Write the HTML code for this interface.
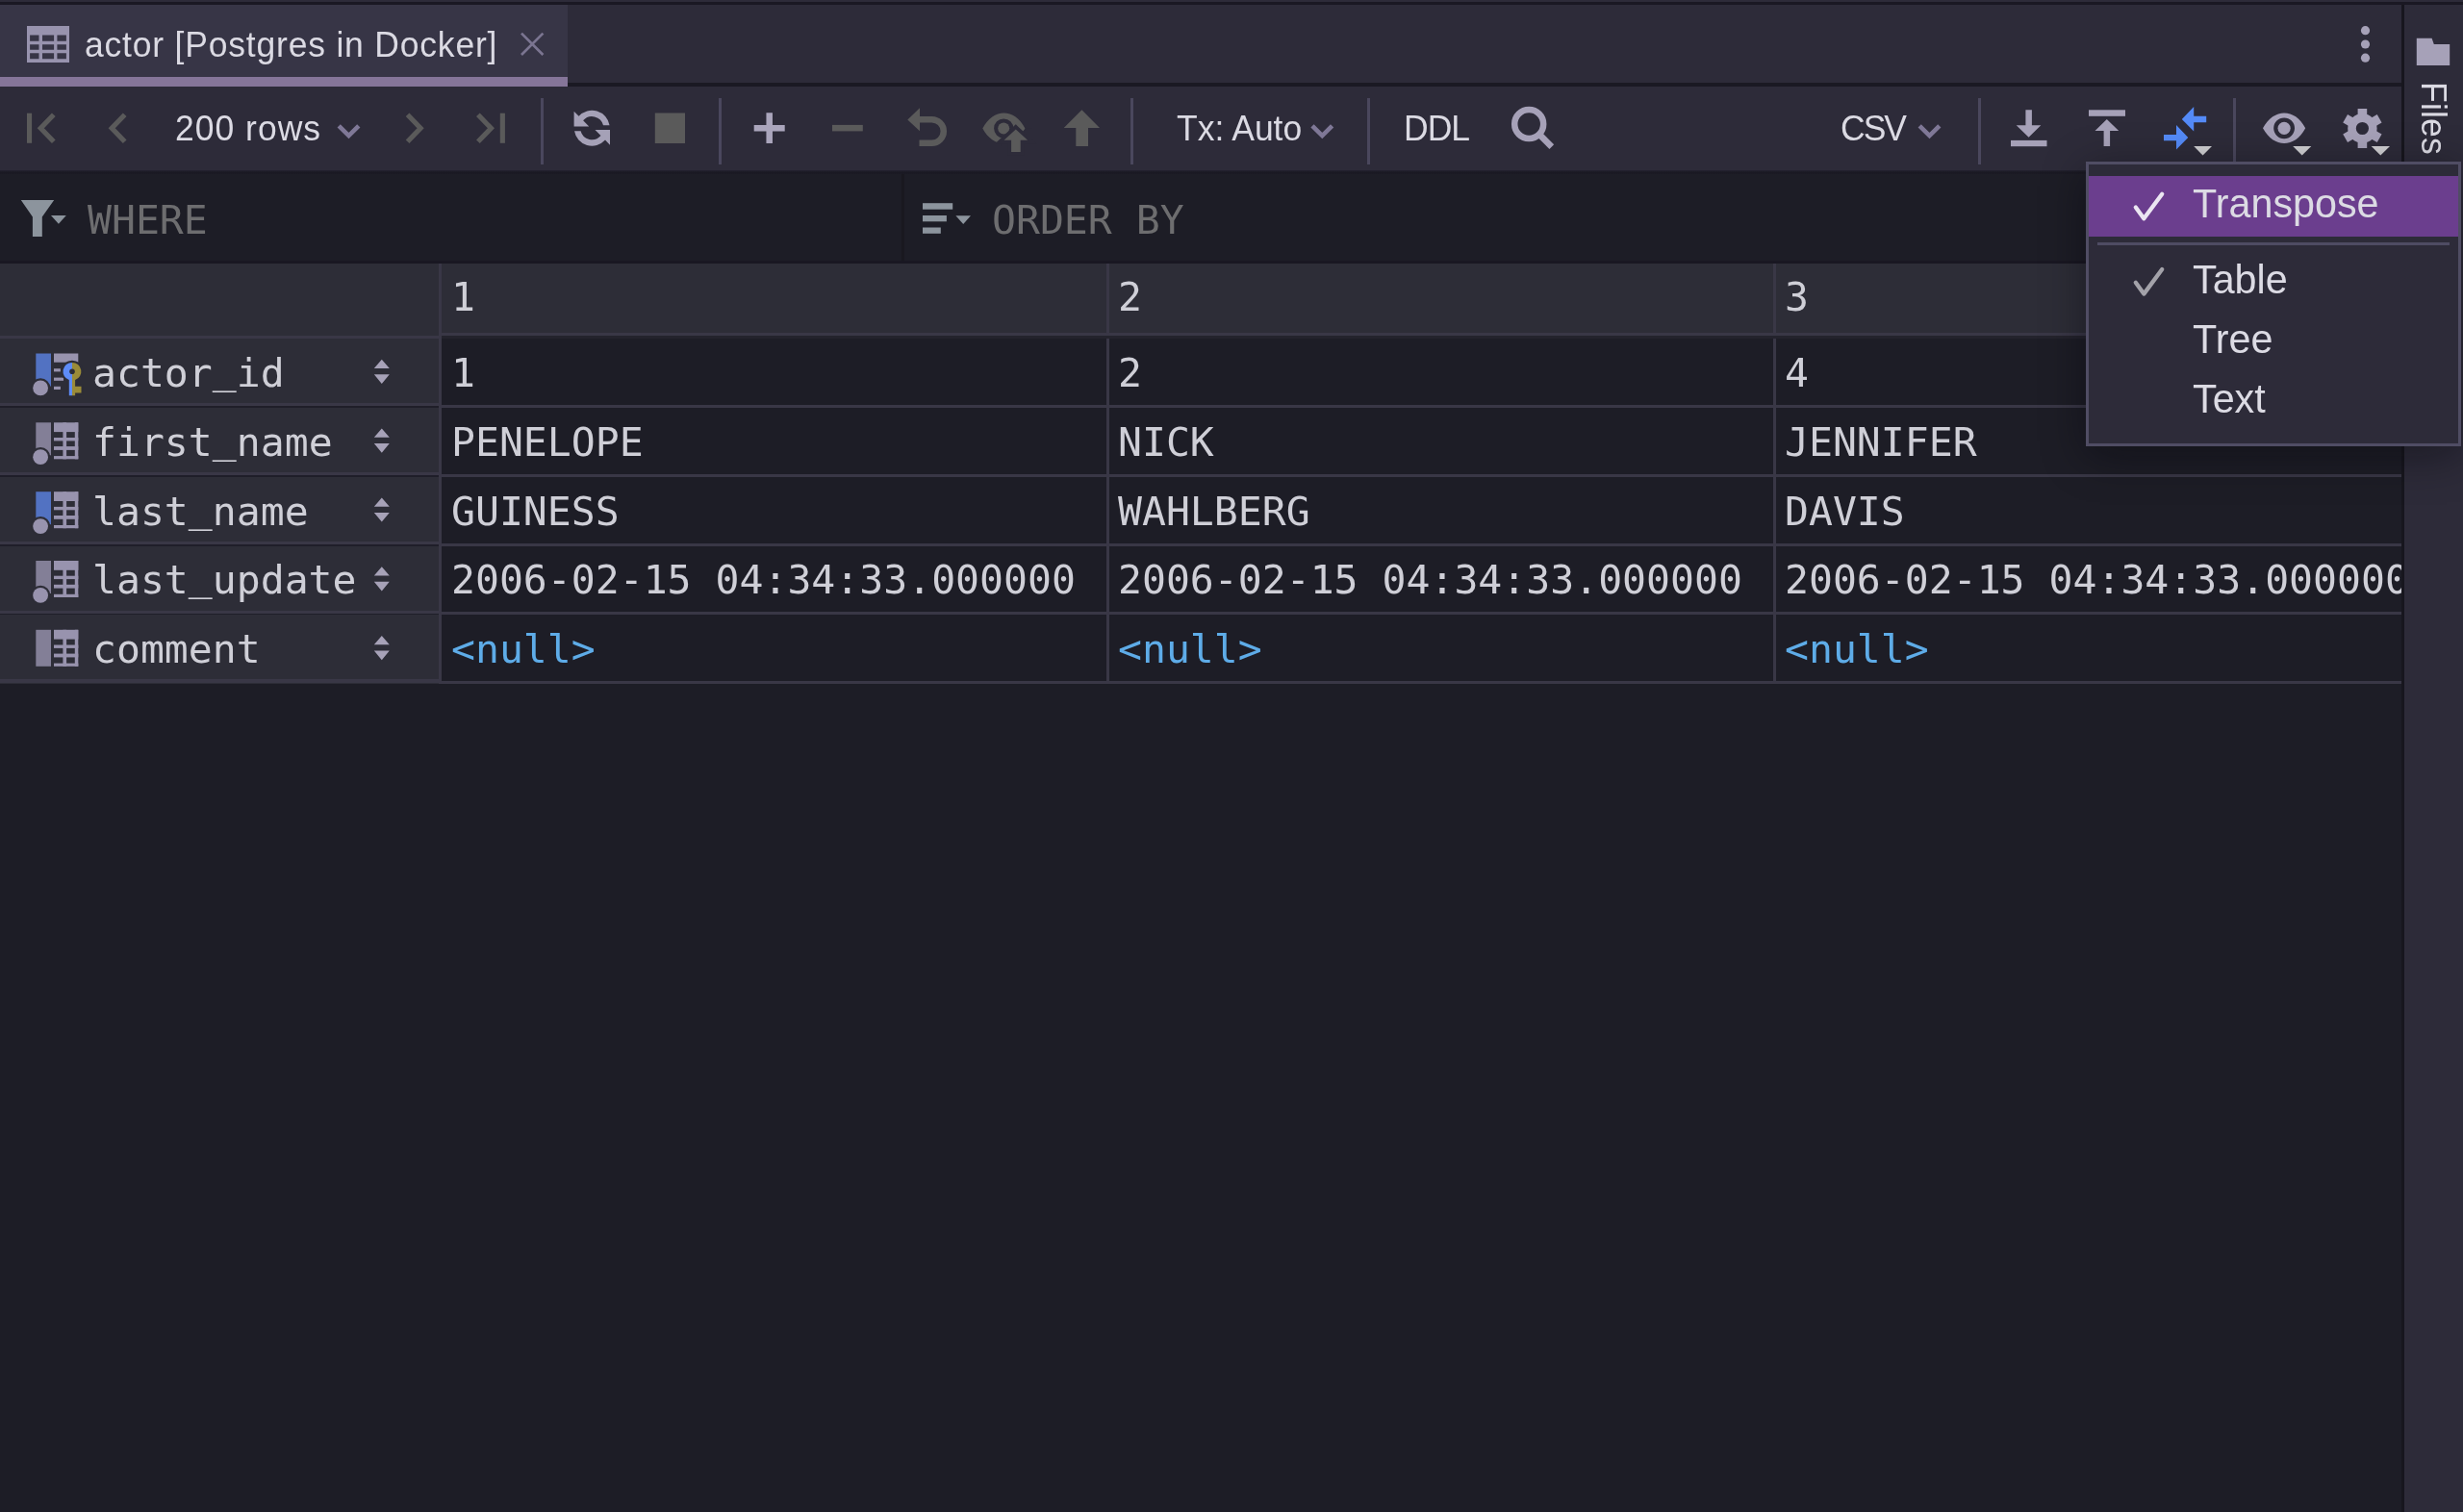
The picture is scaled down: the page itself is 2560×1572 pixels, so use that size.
<!DOCTYPE html>
<html lang="en">
<head>
<meta charset="utf-8">
<title>actor [Postgres in Docker]</title>
<style>
  html, body { margin: 0; padding: 0; }
  body {
    width: 2560px; height: 1572px; overflow: hidden; position: relative;
    background: #1d1d26;
    font-family: "Liberation Sans", sans-serif;
    color: #dcdbe4;
  }
  .abs { position: absolute; }
  .ui, .mono, .pi { will-change: transform; }
  .ui { font-family: "Liberation Sans", sans-serif; font-size: 35.5px; line-height: 40px; white-space: nowrap; color: #dbdae3; transform: scaleY(1.05); transform-origin: 0 32.3px; }
  .mono { font-family: "DejaVu Sans Mono", "Liberation Mono", monospace; font-size: 41.46px; line-height: 48px; white-space: pre; color: #cfcfd7; }
  svg { position: absolute; overflow: visible; }

  /* ---------- chrome ---------- */
  #topstrip { left: 0; top: 0; width: 2560px; height: 2px; background: #2d2b39; }
  #topline  { left: 0; top: 2px; width: 2560px; height: 3px; background: #1a1823; }
  #tabbar   { left: 0; top: 5px; width: 2496px; height: 81px; background: #2d2b39; }
  #tabline  { left: 590px; top: 86px; width: 1906px; height: 4px; background: #1a1923; }
  #tab      { left: 0; top: 5px; width: 590px; height: 75px; background: #373546; }
  #tabul    { left: 0; top: 80px; width: 590px; height: 10px; background: #857599; }
  #toolbar  { left: 0; top: 90px; width: 2496px; height: 87px; background: #2d2b39; }
  #toolsh   { left: 0; top: 177px; width: 2496px; height: 4px; background: linear-gradient(#232230, #1a1923 50%, #1b1a24); }
  #filter   { left: 0; top: 181px; width: 2496px; height: 90px; background: #1d1d26; }
  #filtdiv  { left: 937px; top: 181px; width: 3px; height: 90px; background: #19181f; }
  #filtline { left: 0; top: 271px; width: 2496px; height: 3px; background: #191722; }
  #strip    { left: 2499px; top: 5px; width: 61px; height: 1567px; background: #2d2b39; }
  #stripdiv { left: 2496px; top: 5px; width: 3px; height: 1567px; background: #17161e; }
  .sep { width: 3px; top: 102px; height: 69px; background: #4a475d; }

  /* ---------- table ---------- */
  #tablewrap { left: 0; top: 274px; width: 2496px; height: 440px; overflow: hidden; }
  .hdrbg { background: #2d2d37; }
  .gl { background: #393746; }
  .cell { height: 48px; }
  .null { color: #5eace8; }
  .rh { left: 98px; }
  .us { position: relative; top: -4.5px; }

  /* ---------- popup ---------- */
  #popup {
    left: 2168px; top: 168px; width: 384px; height: 290px;
    border: 3px solid #504d64; background: #2d2b39;
    box-shadow: 0 10px 42px 0 rgba(5,5,10,0.42);
  }
  #popup .sel { left: 0; top: 12px; width: 384px; height: 63px; background: #6b3e8e; }
  #popup .psep { left: 9px; top: 81px; width: 366px; height: 3px; background: #4f4c63; }
  .pi { font-family: "Liberation Sans", sans-serif; font-size: 41.3px; line-height: 46px; white-space: nowrap; color: #dcdbe4; left: 107.6px; transform: scaleY(1.01); transform-origin: 0 37.3px; }
</style>
</head>
<body>

<!-- window chrome backgrounds -->
<div class="abs" id="topstrip"></div>
<div class="abs" id="topline"></div>
<div class="abs" id="tabbar"></div>
<div class="abs" id="tabline"></div>
<div class="abs" id="tab"></div>
<div class="abs" id="tabul"></div>
<div class="abs" id="toolbar"></div>
<div class="abs" id="toolsh"></div>
<div class="abs" id="filter"></div>
<div class="abs" id="filtdiv"></div>
<div class="abs" id="filtline"></div>

<!-- TAB -->
<svg style="left:28px;top:27px" width="44" height="38" viewBox="0 0 44 38">
  <path fill="#9893ae" fill-rule="evenodd" d="M0 0H44V38H0Z
    M3.1 9.5V15.7H12.5V9.5Z M16 9.5V15.7H28.1V9.5Z M31.4 9.5V15.7H40.9V9.5Z
    M3.1 19.2V24.8H12.5V19.2Z M16 19.2V24.8H28.1V19.2Z M31.4 19.2V24.8H40.9V19.2Z
    M3.1 28.2V34.2H12.5V28.2Z M16 28.2V34.2H28.1V28.2Z M31.4 28.2V34.2H40.9V28.2Z"/>
</svg>
<div class="abs ui" id="tabtext" style="left:88px;top:26.8px;letter-spacing:0.8px">actor [Postgres in Docker]</div>
<svg style="left:541px;top:34px" width="24" height="24" viewBox="0 0 24 24">
  <path d="M1 0.6L23.4 23M23.4 0.6L1 23" stroke="#7b7591" stroke-width="2.7" fill="none"/>
</svg>
<svg style="left:2450px;top:24px" width="18" height="44" viewBox="0 0 18 44">
  <circle cx="8.5" cy="7.7" r="4.6" fill="#a6a1b8"/><circle cx="8.5" cy="22" r="4.6" fill="#a6a1b8"/><circle cx="8.5" cy="36.2" r="4.6" fill="#a6a1b8"/>
</svg>

<!-- TOOLBAR -->
<div class="abs sep" style="left:562px"></div>
<div class="abs sep" style="left:747px"></div>
<div class="abs sep" style="left:1175px"></div>
<div class="abs sep" style="left:1421px"></div>
<div class="abs sep" style="left:2056px"></div>
<div class="abs sep" style="left:2321px"></div>
<svg id="tbicons" style="left:0;top:90px" width="2496" height="87" viewBox="0 90 2496 87">
  <!-- pagination (disabled) -->
  <g fill="none" stroke="#5a5a5a" stroke-width="5.2">
    <path d="M55.8 119.3L42.3 133.3L55.8 147.3"/>
    <path d="M129.7 119.3L116.2 133.3L129.7 147.3"/>
    <path d="M423.6 119.3L437.1 133.3L423.6 147.3"/>
    <path d="M496.9 119.3L510.4 133.3L496.9 147.3"/>
  </g>
  <rect x="28" y="117.7" width="5.1" height="31.1" fill="#5a5a5a"/>
  <rect x="519.8" y="117.7" width="5.1" height="31.1" fill="#5a5a5a"/>
  <!-- dropdown chevrons -->
  <g fill="none" stroke="#7f7897" stroke-width="4.6">
    <path d="M352.2 130.8L362.5 141.1L372.8 130.8"/>
    <path d="M1364 130.8L1374.3 141.1L1384.6 130.8"/>
    <path d="M1995.2 130.8L2005.5 141.1L2015.8 130.8"/>
  </g>
  <!-- refresh -->
  <g fill="#a5a1b7">
    <path d="M596.6 115.8L601.58 120.78A18.5 18.5 0 0 1 633.55 130.2H627A12.1 12.1 0 0 0 606.12 125.32L612.2 131.6H596.6Z"/>
    <path d="M634 150.8L629.02 145.62A18.5 18.5 0 0 1 597.05 136.2H603.6A12.1 12.1 0 0 0 624.48 141.08L618.5 135.1H634Z"/>
  </g>
  <!-- stop -->
  <rect x="680.8" y="117.5" width="31.2" height="31.5" fill="#5a5a5a"/>
  <!-- plus -->
  <path d="M783.7 133.2H815.7M799.7 117.3V149" stroke="#aaa5bc" stroke-width="6.5" fill="none"/>
  <!-- minus -->
  <rect x="865" y="129.9" width="31.8" height="6.5" fill="#5a5a5a"/>
  <!-- undo -->
  <path d="M943.3 124.4L956 112.3V136.3Z" fill="#5a5a5a"/>
  <path d="M955.5 124.2H968.5A12.3 12.3 0 0 1 968.5 148.8H955.5" stroke="#5a5a5a" stroke-width="6.5" fill="none"/>
  <!-- eye + arrow (disabled) -->
  <path fill="#5a5a5a" fill-rule="evenodd" d="M1021.3 133.5C1027 122.8 1035 117.6 1043.3 117.6C1052 117.6 1060 122.8 1065.4 133.5C1060 144 1052 149.3 1043.3 149.3C1035 149.3 1027 144 1021.3 133.5Z M1043.2 123.4A10.1 10.1 0 1 0 1043.2 143.6A10.1 10.1 0 1 0 1043.2 123.4Z"/>
  <circle cx="1043.2" cy="133.5" r="6" fill="#5a5a5a"/>
  <path d="M1067.5 133.2L1060.5 138.5V153H1073V133.2Z M1040.5 147.6H1052V152H1040.5Z" fill="#2d2b39"/>
  <path d="M1055.8 134.4L1068.1 145.8H1060.7V158H1051.1V145.8H1043.5Z" fill="#5a5a5a" stroke="#2d2b39" stroke-width="7.4" paint-order="stroke" stroke-linejoin="miter"/>
  <!-- up arrow (disabled) -->
  <path d="M1124.4 114.3L1143 132.9H1131V152H1118.3V132.9H1105.7Z" fill="#5a5a5a"/>
  <!-- search -->
  <circle cx="1589.2" cy="129" r="15" fill="none" stroke="#a6a1b8" stroke-width="6.5"/>
  <path d="M1599.6 139.4L1612.8 152.6" stroke="#a6a1b8" stroke-width="6.6" fill="none"/>
  <!-- download -->
  <g fill="#a6a1b8">
    <rect x="2090" y="145.9" width="37.5" height="6.3"/>
    <path d="M2105.4 114.3H2111.9V130.3H2121.3L2108.6 142.8L2095.7 130.3H2105.4Z"/>
    <!-- upload -->
    <rect x="2171" y="114.3" width="38" height="6.5"/>
    <path d="M2189.8 124L2202.2 136.1H2193.1V152.1H2186.6V136.1H2177.5Z"/>
  </g>
  <!-- transpose (active, blue) -->
  <g fill="#548af7">
    <path d="M2267.8 124L2280.2 111V120.8H2293.2V127.3H2280.2V136.6Z"/>
    <path d="M2274.3 143L2262 155.6V146.2H2249V139.9H2262V130Z"/>
  </g>
  <!-- small dropdown triangles -->
  <g fill="#cfcfd2">
    <path d="M2280.2 152.1H2299L2289.6 161.5Z"/>
    <path d="M2383.2 152.1H2402.3L2392.7 161.5Z"/>
    <path d="M2464.7 152.1H2484L2474.3 161.5Z"/>
  </g>
  <!-- eye -->
  <path fill="#a6a1b8" fill-rule="evenodd" d="M2352 133.3C2358 122.5 2366 117.5 2374.1 117.5C2382.5 117.5 2390.5 122.5 2396.2 133.3C2390.5 144 2382.5 149.1 2374.1 149.1C2366 149.1 2358 144 2352 133.3Z M2374.1 122.4A10.9 10.9 0 1 0 2374.1 144.2A10.9 10.9 0 1 0 2374.1 122.4Z"/>
  <circle cx="2374.1" cy="133.3" r="6.6" fill="#a6a1b8"/>
  <!-- gear -->
  <g id="gear" transform="translate(2455.4 133.5)" fill="#a6a1b8">
    <path fill-rule="evenodd" d="M0 -15.2A15.2 15.2 0 1 0 0 15.2A15.2 15.2 0 1 0 0 -15.2Z M0 -6.6A6.6 6.6 0 1 1 0 6.6A6.6 6.6 0 1 1 0 -6.6Z"/>
    <rect x="-4.8" y="-20.5" width="9.6" height="9"/>
    <rect x="-4.8" y="-20.5" width="9.6" height="9" transform="rotate(60)"/>
    <rect x="-4.8" y="-20.5" width="9.6" height="9" transform="rotate(120)"/>
    <rect x="-4.8" y="-20.5" width="9.6" height="9" transform="rotate(180)"/>
    <rect x="-4.8" y="-20.5" width="9.6" height="9" transform="rotate(240)"/>
    <rect x="-4.8" y="-20.5" width="9.6" height="9" transform="rotate(300)"/>
  </g>
</svg>
<div class="abs ui" id="t_rows" style="left:181.5px;top:113.7px;letter-spacing:1px">200 rows</div>
<div class="abs ui" id="t_tx" style="left:1222.5px;top:113.7px">Tx: Auto</div>
<div class="abs ui" id="t_ddl" style="left:1458.5px;top:113.7px;letter-spacing:-1px">DDL</div>
<div class="abs ui" id="t_csv" style="left:1912.5px;top:113.7px;letter-spacing:-2px">CSV</div>

<!-- FILTER -->
<svg id="flticons" style="left:0;top:181px" width="1300" height="90" viewBox="0 181 1300 90">
  <g fill="#8c949d">
    <path d="M21.8 208H56.2L43.8 225.5V246H33.9V225.5Z"/>
    <path d="M53 224H68.8L60.9 232.8Z"/>
    <rect x="959" y="211.2" width="31.2" height="6.5"/>
    <rect x="959" y="224" width="24.9" height="6.3"/>
    <rect x="959" y="236.5" width="18.8" height="6.3"/>
    <path d="M993.4 224.2H1009L1001.2 232.9Z"/>
  </g>
</svg>
<div class="abs mono" id="t_where" style="left:91px;top:204.5px;color:#6d6d6f">WHERE</div>
<div class="abs mono" id="t_order" style="left:1031.3px;top:204.5px;color:#6d6d6f">ORDER BY</div>

<!-- TABLE -->
<div class="abs hdrbg" style="left:0;top:274px;width:2496px;height:72px"></div>
<div class="abs hdrbg" style="left:0;top:346px;width:456px;height:365px"></div>
<div class="abs gl" style="left:459px;top:346px;width:2037px;height:3px"></div>
<div class="abs gl" style="left:0;top:349px;width:456px;height:3px"></div>
<div class="abs gl" style="left:459px;top:420.8px;width:2037px;height:3.2px"></div>
<div class="abs gl" style="left:0;top:419.1px;width:456px;height:3.2px"></div>
<div class="abs" style="left:0;top:422.3px;width:456px;height:1.7px;background:#1f1e29"></div>
<div class="abs gl" style="left:459px;top:492.6px;width:2037px;height:3.2px"></div>
<div class="abs gl" style="left:0;top:490.9px;width:456px;height:3.2px"></div>
<div class="abs" style="left:0;top:494.1px;width:456px;height:1.7px;background:#1f1e29"></div>
<div class="abs gl" style="left:459px;top:564.5px;width:2037px;height:3.2px"></div>
<div class="abs gl" style="left:0;top:562.8px;width:456px;height:3.2px"></div>
<div class="abs" style="left:0;top:566.0px;width:456px;height:1.7px;background:#1f1e29"></div>
<div class="abs gl" style="left:459px;top:636.3px;width:2037px;height:3.2px"></div>
<div class="abs gl" style="left:0;top:634.6px;width:456px;height:3.2px"></div>
<div class="abs" style="left:0;top:637.8px;width:456px;height:1.7px;background:#1f1e29"></div>
<div class="abs gl" style="left:459px;top:708.1px;width:2037px;height:3.2px"></div>
<div class="abs gl" style="left:0;top:706.4px;width:456px;height:3.2px"></div>
<div class="abs gl" style="left:456px;top:274px;width:3.2px;height:437.3px"></div>
<div class="abs gl" style="left:1149.6px;top:274px;width:3.2px;height:437.3px"></div>
<div class="abs gl" style="left:1843px;top:274px;width:3.2px;height:437.3px"></div>
<div class="abs" style="left:459px;top:349px;width:2037px;height:3.3px;background:#24232d"></div>
<div class="abs mono cell" style="left:468.5px;top:285.45px">1</div>
<div class="abs mono cell" style="left:1161.8px;top:285.45px">2</div>
<div class="abs mono cell" style="left:1855.1px;top:285.45px">3</div>
<div class="abs mono cell rh" style="left:96px;top:363.85px">actor<span class="us">_</span>id</div>
<div class="abs mono cell" style="left:468.5px;top:363.85px">1</div>
<div class="abs mono cell" style="left:1161.8px;top:363.85px">2</div>
<div class="abs mono cell" style="left:1855.1px;top:363.85px">4</div>
<div class="abs mono cell rh" style="left:96px;top:435.68px">first<span class="us">_</span>name</div>
<div class="abs mono cell" style="left:468.5px;top:435.68px">PENELOPE</div>
<div class="abs mono cell" style="left:1161.8px;top:435.68px">NICK</div>
<div class="abs mono cell" style="left:1855.1px;top:435.68px">JENNIFER</div>
<div class="abs mono cell rh" style="left:96px;top:507.51px">last<span class="us">_</span>name</div>
<div class="abs mono cell" style="left:468.5px;top:507.51px">GUINESS</div>
<div class="abs mono cell" style="left:1161.8px;top:507.51px">WAHLBERG</div>
<div class="abs mono cell" style="left:1855.1px;top:507.51px">DAVIS</div>
<div class="abs mono cell rh" style="left:96px;top:579.34px">last<span class="us">_</span>update</div>
<div class="abs mono cell" style="left:468.5px;top:579.34px">2006-02-15 04:34:33.000000</div>
<div class="abs mono cell" style="left:1161.8px;top:579.34px">2006-02-15 04:34:33.000000</div>
<div class="abs mono cell" style="left:1855.1px;top:579.34px">2006-02-15 04:34:33.000000</div>
<div class="abs mono cell rh" style="left:96px;top:651.17px">comment</div>
<div class="abs mono cell null" style="left:468.5px;top:651.17px">&lt;null&gt;</div>
<div class="abs mono cell null" style="left:1161.8px;top:651.17px">&lt;null&gt;</div>
<div class="abs mono cell null" style="left:1855.1px;top:651.17px">&lt;null&gt;</div>
<svg id="rowicons" style="left:0;top:274px" width="460" height="440" viewBox="0 274 460 440">
<path fill="#a7a2b8" d="M396.8 373.8L404.8 383.0H388.8Z M388.8 389.2H404.8L396.8 398.9Z"/>
<rect x="37.3" y="367.5" width="15.7" height="34" fill="#5272c2"/>
<circle cx="42.1" cy="403.4" r="7.9" fill="#9893ae" stroke="#2d2d37" stroke-width="4.6" paint-order="stroke"/>
<g fill="#9893ae"><rect x="56" y="367.5" width="25.3" height="9.2"/><rect x="56" y="383.2" width="6.9" height="3.2"/><rect x="56" y="392.6" width="10" height="3.2"/><rect x="56" y="401.8" width="6.9" height="3.2"/></g>
<path d="M75 376.9A9.3 9.3 0 0 1 78.1 395.0V401.8H84.5V408.5H78.1V411.2H71.8V395.0A9.3 9.3 0 0 1 75 376.9Z" fill="#2d2d37" stroke="#2d2d37" stroke-width="4.4"/>
<path fill="#5e8cf8" d="M75 376.9A9.3 9.3 0 0 0 71.8 395.0V411.2H75Z"/>
<path fill="#9a8b38" d="M75 376.9A9.3 9.3 0 0 1 78.1 395.0V401.8H84.5V408.5H78.1V411.2H75Z"/>
<circle cx="75" cy="386.2" r="2.8" fill="#2d2d37"/>
<path fill="#a7a2b8" d="M396.8 445.6L404.8 454.8H388.8Z M388.8 461.0H404.8L396.8 470.7Z"/>
<rect x="37.3" y="439.3" width="15.7" height="34" fill="#837f97"/>
<circle cx="42.1" cy="475.2" r="7.9" fill="#9893ae" stroke="#2d2d37" stroke-width="4.6" paint-order="stroke"/>
<g fill="#9893ae"><rect x="56" y="439.3" width="25.3" height="9.8"/><rect x="77.8" y="439.3" width="3.5" height="38"/><rect x="65.4" y="439.3" width="3.7" height="38"/><rect x="56" y="455.0" width="25.3" height="3.4"/><rect x="56" y="464.1" width="25.3" height="3.8"/><rect x="56" y="474.1" width="25.3" height="3.2"/></g>
<path fill="#a7a2b8" d="M396.8 517.5L404.8 526.7H388.8Z M388.8 532.9H404.8L396.8 542.6Z"/>
<rect x="37.3" y="511.2" width="15.7" height="34" fill="#5272c2"/>
<circle cx="42.1" cy="547.1" r="7.9" fill="#9893ae" stroke="#2d2d37" stroke-width="4.6" paint-order="stroke"/>
<g fill="#9893ae"><rect x="56" y="511.2" width="25.3" height="9.8"/><rect x="77.8" y="511.2" width="3.5" height="38"/><rect x="65.4" y="511.2" width="3.7" height="38"/><rect x="56" y="526.9" width="25.3" height="3.4"/><rect x="56" y="536.0" width="25.3" height="3.8"/><rect x="56" y="546.0" width="25.3" height="3.2"/></g>
<path fill="#a7a2b8" d="M396.8 589.3L404.8 598.5H388.8Z M388.8 604.7H404.8L396.8 614.4Z"/>
<rect x="37.3" y="583.0" width="15.7" height="34" fill="#837f97"/>
<circle cx="42.1" cy="618.9" r="7.9" fill="#9893ae" stroke="#2d2d37" stroke-width="4.6" paint-order="stroke"/>
<g fill="#9893ae"><rect x="56" y="583.0" width="25.3" height="9.8"/><rect x="77.8" y="583.0" width="3.5" height="38"/><rect x="65.4" y="583.0" width="3.7" height="38"/><rect x="56" y="598.7" width="25.3" height="3.4"/><rect x="56" y="607.8" width="25.3" height="3.8"/><rect x="56" y="617.8" width="25.3" height="3.2"/></g>
<path fill="#a7a2b8" d="M396.8 661.1L404.8 670.3H388.8Z M388.8 676.5H404.8L396.8 686.2Z"/>
<rect x="37.3" y="654.8" width="15.7" height="38" fill="#837f97"/>
<g fill="#9893ae"><rect x="56" y="654.8" width="25.3" height="9.8"/><rect x="77.8" y="654.8" width="3.5" height="38"/><rect x="65.4" y="654.8" width="3.7" height="38"/><rect x="56" y="670.5" width="25.3" height="3.4"/><rect x="56" y="679.6" width="25.3" height="3.8"/><rect x="56" y="689.6" width="25.3" height="3.2"/></g>
</svg>

<!-- RIGHT STRIP -->
<div class="abs" id="stripdiv"></div>
<div class="abs" id="strip"></div>
<svg style="left:2511px;top:39px" width="36" height="30" viewBox="2511 39 36 30">
  <path fill="#a6a1b8" d="M2511.8 39.7H2527.6L2529.8 46H2546.2V68.1H2511.8Z"/>
</svg>
<div class="abs ui" id="t_files" style="left:2551px;top:85.3px;transform-origin:0 0;transform:rotate(90deg) scaleY(1.05);letter-spacing:0.2px">Files</div>

<!-- POPUP -->
<div class="abs" id="popup">
  <div class="abs sel"></div>
  <div class="abs psep"></div>
  <svg style="left:0;top:0" width="384" height="290" viewBox="2171 171 384 290">
    <path d="M2219.8 215.4L2228.3 227.3L2247.2 201.7" fill="none" stroke="#ebe6f2" stroke-width="4.3" stroke-linecap="round" stroke-linejoin="round"/>
    <path d="M2219.8 293.7L2228.3 305.6L2247.2 280" fill="none" stroke="#a3a2a9" stroke-width="4.3" stroke-linecap="round" stroke-linejoin="round"/>
  </svg>
  <div class="abs pi" id="p1" style="top:18.4px">Transpose</div>
  <div class="abs pi" id="p2" style="top:96.6px">Table</div>
  <div class="abs pi" id="p3" style="top:159px">Tree</div>
  <div class="abs pi" id="p4" style="top:221.4px">Text</div>
</div>

</body>
</html>
